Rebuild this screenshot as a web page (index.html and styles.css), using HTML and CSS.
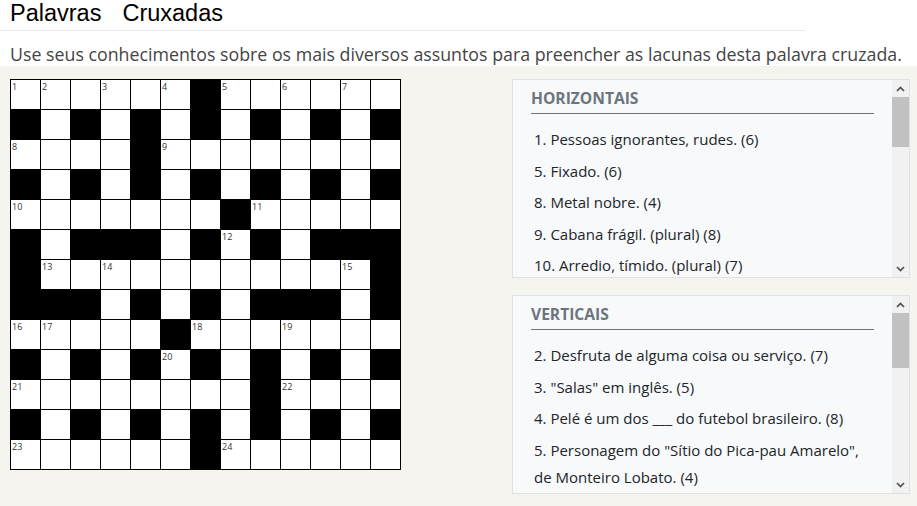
FILE: index.html
```html
<!DOCTYPE html>
<html lang="pt-BR">
<head>
<meta charset="utf-8">
<title>Palavras Cruxadas</title>
<link rel="stylesheet" href="styles.css">
</head>
<body>
<header class="top">
  <h1 class="title"><span>Palavras</span><span>Cruxadas</span></h1>
  <div class="rule"></div>
  <p class="lead">Use seus conhecimentos sobre os mais diversos assuntos para preencher as lacunas desta palavra cruzada.</p>
</header>
<main class="main">
  <div class="grid">
    <div class="cell">1</div><div class="cell">2</div><div class="cell"></div><div class="cell">3</div><div class="cell"></div><div class="cell">4</div><div class="cell block"></div><div class="cell">5</div><div class="cell"></div><div class="cell">6</div><div class="cell"></div><div class="cell">7</div><div class="cell"></div>
    <div class="cell block"></div><div class="cell"></div><div class="cell block"></div><div class="cell"></div><div class="cell block"></div><div class="cell"></div><div class="cell block"></div><div class="cell"></div><div class="cell block"></div><div class="cell"></div><div class="cell block"></div><div class="cell"></div><div class="cell block"></div>
    <div class="cell">8</div><div class="cell"></div><div class="cell"></div><div class="cell"></div><div class="cell block"></div><div class="cell">9</div><div class="cell"></div><div class="cell"></div><div class="cell"></div><div class="cell"></div><div class="cell"></div><div class="cell"></div><div class="cell"></div>
    <div class="cell block"></div><div class="cell"></div><div class="cell block"></div><div class="cell"></div><div class="cell block"></div><div class="cell"></div><div class="cell block"></div><div class="cell"></div><div class="cell block"></div><div class="cell"></div><div class="cell block"></div><div class="cell"></div><div class="cell block"></div>
    <div class="cell">10</div><div class="cell"></div><div class="cell"></div><div class="cell"></div><div class="cell"></div><div class="cell"></div><div class="cell"></div><div class="cell block"></div><div class="cell">11</div><div class="cell"></div><div class="cell"></div><div class="cell"></div><div class="cell"></div>
    <div class="cell block"></div><div class="cell"></div><div class="cell block"></div><div class="cell block"></div><div class="cell block"></div><div class="cell"></div><div class="cell block"></div><div class="cell">12</div><div class="cell block"></div><div class="cell"></div><div class="cell block"></div><div class="cell block"></div><div class="cell block"></div>
    <div class="cell block"></div><div class="cell">13</div><div class="cell"></div><div class="cell">14</div><div class="cell"></div><div class="cell"></div><div class="cell"></div><div class="cell"></div><div class="cell"></div><div class="cell"></div><div class="cell"></div><div class="cell">15</div><div class="cell block"></div>
    <div class="cell block"></div><div class="cell block"></div><div class="cell block"></div><div class="cell"></div><div class="cell block"></div><div class="cell"></div><div class="cell block"></div><div class="cell"></div><div class="cell block"></div><div class="cell block"></div><div class="cell block"></div><div class="cell"></div><div class="cell block"></div>
    <div class="cell">16</div><div class="cell">17</div><div class="cell"></div><div class="cell"></div><div class="cell"></div><div class="cell block"></div><div class="cell">18</div><div class="cell"></div><div class="cell"></div><div class="cell">19</div><div class="cell"></div><div class="cell"></div><div class="cell"></div>
    <div class="cell block"></div><div class="cell"></div><div class="cell block"></div><div class="cell"></div><div class="cell block"></div><div class="cell">20</div><div class="cell block"></div><div class="cell"></div><div class="cell block"></div><div class="cell"></div><div class="cell block"></div><div class="cell"></div><div class="cell block"></div>
    <div class="cell">21</div><div class="cell"></div><div class="cell"></div><div class="cell"></div><div class="cell"></div><div class="cell"></div><div class="cell"></div><div class="cell"></div><div class="cell block"></div><div class="cell">22</div><div class="cell"></div><div class="cell"></div><div class="cell"></div>
    <div class="cell block"></div><div class="cell"></div><div class="cell block"></div><div class="cell"></div><div class="cell block"></div><div class="cell"></div><div class="cell block"></div><div class="cell"></div><div class="cell block"></div><div class="cell"></div><div class="cell block"></div><div class="cell"></div><div class="cell block"></div>
    <div class="cell">23</div><div class="cell"></div><div class="cell"></div><div class="cell"></div><div class="cell"></div><div class="cell"></div><div class="cell block"></div><div class="cell">24</div><div class="cell"></div><div class="cell"></div><div class="cell"></div><div class="cell"></div><div class="cell"></div>
  </div>
  <aside class="clues">
    <section class="panel">
      <div class="panel-body">
        <h2 class="panel-title">HORIZONTAIS</h2>
        <ol class="clue-list">
          <li>1. Pessoas ignorantes, rudes. (6)</li>
          <li>5. Fixado. (6)</li>
          <li>8. Metal nobre. (4)</li>
          <li>9. Cabana frágil. (plural) (8)</li>
          <li>10. Arredio, tímido. (plural) (7)</li>
        </ol>
      </div>
      <div class="scrollbar">
        <div class="sb-btn"><svg width="9" height="6" viewBox="0 0 9 6"><polyline points="1,5 4.5,1.5 8,5" fill="none" stroke="#505050" stroke-width="1.7"/></svg></div>
        <div class="sb-track"><div class="sb-thumb" style="height:50px"></div></div>
        <div class="sb-btn"><svg width="9" height="6" viewBox="0 0 9 6"><polyline points="1,1 4.5,4.5 8,1" fill="none" stroke="#505050" stroke-width="1.7"/></svg></div>
      </div>
    </section>
    <section class="panel">
      <div class="panel-body">
        <h2 class="panel-title">VERTICAIS</h2>
        <ol class="clue-list">
          <li>2. Desfruta de alguma coisa ou serviço. (7)</li>
          <li>3. "Salas" em inglês. (5)</li>
          <li>4. Pelé é um dos ___ do futebol brasileiro. (8)</li>
          <li>5. Personagem do "Sítio do Pica-pau Amarelo", de Monteiro Lobato. (4)</li>
        </ol>
      </div>
      <div class="scrollbar">
        <div class="sb-btn"><svg width="9" height="6" viewBox="0 0 9 6"><polyline points="1,5 4.5,1.5 8,5" fill="none" stroke="#505050" stroke-width="1.7"/></svg></div>
        <div class="sb-track"><div class="sb-thumb" style="height:55px"></div></div>
        <div class="sb-btn"><svg width="9" height="6" viewBox="0 0 9 6"><polyline points="1,1 4.5,4.5 8,1" fill="none" stroke="#505050" stroke-width="1.7"/></svg></div>
      </div>
    </section>
  </aside>
</main>
</body>
</html>
```

FILE: styles.css
```css
html, body {
  margin: 0;
  background: #f5f4ee;
}
body {
  font-family: "Open Sans", "Noto Sans", sans-serif;
  min-height: 100vh;
}
.top {
  background: #fff;
}
.title {
  margin: 0;
  padding-left: 10px;
  display: flex;
  gap: 21px;
  font-family: "Liberation Sans", Arial, sans-serif;
  font-weight: 400;
  font-size: 23.5px;
  line-height: 26px;
  color: #000;
}
.rule {
  width: 805px;
  height: 1px;
  margin-top: 4px;
  background: #e9e9e9;
}
.lead {
  margin: 11px 0 0;
  padding-left: 10px;
  font-size: 17.8px;
  line-height: 24px;
  color: #444;
}
.main {
  display: flex;
  justify-content: space-between;
  align-items: flex-start;
  padding: 13px 7px 0 10px;
}
.grid {
  display: grid;
  grid-template-columns: repeat(13, 29px);
  grid-auto-rows: 29px;
  gap: 1px;
  background: #000;
  border: 1px solid #000;
}
.cell {
  background: #fff;
  box-sizing: border-box;
  padding: 1px 0 0 1px;
  font-size: 9px;
  line-height: 11px;
  color: #333;
}
.cell.block {
  background: #000;
}
.clues {
  width: 398px;
  display: flex;
  flex-direction: column;
  gap: 17px;
}
.panel {
  display: flex;
  height: 199px;
  box-sizing: border-box;
  border: 1px solid #dee2e6;
  background: #f8f9fa;
}
.panel-body {
  flex: 1;
  overflow: hidden;
  padding: 8px 18px 0;
}
.panel-title {
  margin: 0 0 12px;
  padding-bottom: 5px;
  border-bottom: 1px solid #6c757d;
  font-size: 15.6px;
  line-height: 20px;
  font-weight: 700;
  color: #6c757d;
}
.clue-list {
  list-style: none;
  margin: 0;
  padding: 0 0 0 3px;
  font-size: 15px;
  line-height: 27.6px;
  color: #212529;
}
.clue-list li {
  margin-bottom: 4px;
}
.scrollbar {
  width: 17px;
  display: flex;
  flex-direction: column;
  background: #f1f1f1;
}
.sb-btn {
  height: 17px;
  display: flex;
  align-items: center;
  justify-content: center;
}
.sb-track {
  flex: 1;
}
.sb-thumb {
  background: #c1c1c1;
}
```
